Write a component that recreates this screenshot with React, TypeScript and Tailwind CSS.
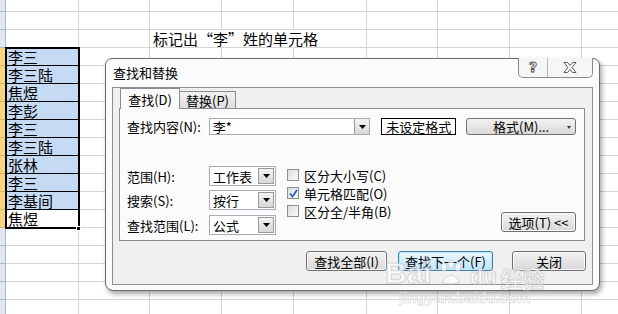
const colW = [73, 71, 72, 72, 73, 71, 72, 72, 72]
const names = ["李三", "李三陆", "焦煜", "李彭", "李三", "李三陆", "张林", "李三", "李基间", "焦煜"]
const rowH = [12, 18, 18, ...names.map(() => 18), 18, 18, 18, 18, 18]

const font = "font-['Noto_Sans_CJK_SC','Noto_Sans',sans-serif]"

function Arrow() {
  return (
    <svg width="7" height="4" viewBox="0 0 7 4">
      <polygon points="0,0 7,0 3.5,4" fill="#000" />
    </svg>
  )
}

function Combo({ value, w, h }: { value: string; w: string; h: string }) {
  return (
    <div className={`${w} ${h} flex items-stretch bg-white border border-[#a9acb4]`}>
      <div className="flex-1 flex items-center pl-[3px] text-[13px] leading-none">{value}</div>
      <div className="w-[16px] m-[1px] flex items-center justify-center border border-[#9a9a9a] bg-gradient-to-b from-[#f4f4f4] to-[#d8d8d8]">
        <Arrow />
      </div>
    </div>
  )
}

function Check({ label, checked }: { label: string; checked?: boolean }) {
  return (
    <div className="h-[18px] flex items-center gap-[5px]">
      <div className="w-[12px] h-[12px] border border-[#8f8f8f] bg-gradient-to-br from-[#dcdcdc] to-[#fbfbfb] flex items-center justify-center">
        {checked && (
          <svg width="9" height="9" viewBox="0 0 9 9">
            <path d="M1 4.5 L3.5 7.5 L8 1" stroke="#2b5fb3" strokeWidth="1.8" fill="none" />
          </svg>
        )}
      </div>
      <span className="text-[13px] leading-none">{label}</span>
    </div>
  )
}

function Btn({ label, w, focus }: { label: string; w: string; focus?: boolean }) {
  return (
    <div
      className={`${w} h-[20px] flex items-center justify-center rounded-[3px] text-[13px] leading-none ${
        focus
          ? "border border-[#3c7fb1] bg-gradient-to-b from-[#eaf6fd] to-[#bee6fd] shadow-[inset_0_0_0_1px_#c4e5f6]"
          : "border border-[#707070] bg-gradient-to-b from-[#f2f2f2] to-[#d9d9d9] shadow-[inset_0_0_0_1px_#fbfbfb]"
      }`}
    >
      {label}
    </div>
  )
}

export default function App() {
  return (
    <div className={`relative w-[618px] h-[314px] overflow-hidden bg-white ${font} text-black`}>
      {/* sheet */}
      <div className="flex flex-col">
        {rowH.map((h, r) => {
          const data = r >= 3 && r < 3 + names.length
          return (
            <div key={r} className="flex shrink-0" style={{ height: h }}>
              <div
                className={`w-[6px] shrink-0 border-r border-b ${
                  data ? "bg-[#f7d47d] border-[#e1b35a]" : "bg-[#e4e8ee] border-[#a9b8cb]"
                }`}
              />
              {colW.map((w, c) => {
                const first = c === 0
                const isData = first && data
                const blackBottom = first && (data || r === 2)
                const title = r === 2 && c === 2
                const hideRight = r === 2 && (c === 2 || c === 3)
                return (
                  <div
                    key={c}
                    className={`relative shrink-0 border-b ${hideRight ? "" : "border-r"} ${
                      blackBottom ? "border-b-black" : "border-b-[#d4d4d4]"
                    } ${isData ? "border-r-black" : "border-r-[#d4d4d4]"} ${
                      isData && r !== 12 ? "bg-[#c5dbf4]" : ""
                    }`}
                    style={{ width: w }}
                  >
                    {isData && (
                      <div className="pl-[2px] text-[15px] leading-[18px] whitespace-nowrap">{names[r - 3]}</div>
                    )}
                    {title && (
                      <div className="absolute left-[3px] top-0 z-10 text-[15px] leading-[18px] whitespace-nowrap">
                        标记出“李”姓的单元格
                      </div>
                    )}
                  </div>
                )
              })}
            </div>
          )
        })}
      </div>

      {/* selection frame */}
      <div className="absolute left-[5px] top-[47px] w-[75px] h-[182px] border-2 border-black pointer-events-none" />
      <div className="absolute left-[76px] top-[226px] w-[5px] h-[5px] bg-black border border-white" />

      {/* dialog */}
      <div className="absolute left-[105px] top-[58px] w-[495px] h-[233px] flex flex-col rounded-t-[7px] rounded-b-[8px] border border-[#6b6b6b] bg-[#fbfbfb] shadow-[2px_3px_5px_rgba(0,0,0,0.35)]">
        <div className="h-[28px] shrink-0 pl-[7px] pt-[7px] text-[13px] leading-none">查找和替换</div>

        <div className="absolute right-[6px] top-[-1px] w-[75px] h-[20px] flex border border-[#8b8b8b] border-t-0 rounded-b-[5px] bg-[#f6f6f6]">
          <div className="w-[29px] flex items-center justify-center border-r border-[#b5b5b5] text-[14px] font-bold text-white [-webkit-text-stroke:1px_#5a5a5a] font-['DejaVu_Sans',sans-serif]">
            ?
          </div>
          <div className="flex-1 flex items-center justify-center">
            <svg width="14" height="11" viewBox="0 0 14 11">
              <polygon
                points="1,0.5 4.5,0.5 7,3.5 9.5,0.5 13,0.5 9,5.5 13,10.5 9.5,10.5 7,7.5 4.5,10.5 1,10.5 5,5.5"
                fill="#fff"
                stroke="#5a5a5a"
                strokeWidth="1"
              />
            </svg>
          </div>
        </div>

        <div className="mx-[6px] h-[198px] shrink-0 flex flex-col border border-[#8e8f8f] bg-[#f0f0f0]">
          {/* tabs */}
          <div className="h-[20px] pl-[7px] flex items-end relative z-10">
            <div className="w-[60px] h-[21px] mb-[-1px] flex items-center justify-center border border-b-0 border-[#898c95] bg-[#fbfbfb] text-[13px] leading-none">
              查找(D)
            </div>
            <div className="w-[56px] h-[17px] flex items-center justify-center border border-l-0 border-b-0 border-[#898c95] bg-gradient-to-b from-[#f2f2f2] to-[#dedede] text-[13px] leading-none">
              替换(P)
            </div>
          </div>

          {/* panel */}
          <div className="ml-[6px] w-[466px] h-[133px] border border-[#898c95] bg-[#fbfbfb] pt-[9px] pl-[7px] pr-[8px] flex flex-col">
            <div className="flex items-center h-[17px]">
              <div className="w-[82px] text-[13px] leading-none">查找内容(N):</div>
              <div className="w-[162px] h-[17px] flex bg-white border border-[#a9acb4]">
                <div className="flex-1 flex items-center pl-[3px] text-[13px] leading-none">李*</div>
                <div className="w-[15px] flex items-center justify-center border-l border-[#9a9a9a] bg-gradient-to-b from-[#f4f4f4] to-[#d8d8d8]">
                  <Arrow />
                </div>
              </div>
              <div className="ml-[11px] w-[75px] h-[17px] flex items-center justify-center border border-black bg-white text-[13px] leading-none">
                未设定格式
              </div>
              <div className="relative ml-[10px] w-[110px] h-[17px] flex items-center justify-center rounded-[3px] border border-[#707070] bg-gradient-to-b from-[#f2f2f2] to-[#d9d9d9] text-[13px] leading-none">
                格式(M)...
                <div className="absolute right-[4px] top-[7px] w-0 h-0 border-l-[2px] border-r-[2px] border-t-[3px] border-l-transparent border-r-transparent border-t-[#333]" />
              </div>
            </div>

            <div className="mt-[31px] flex">
              <div className="flex flex-col">
                <div className="flex items-center">
                  <div className="w-[82px] text-[13px] leading-none">范围(H):</div>
                  <Combo value="工作表" w="w-[67px]" h="h-[20px]" />
                </div>
                <div className="mt-[4px] flex items-center">
                  <div className="w-[82px] text-[13px] leading-none">搜索(S):</div>
                  <Combo value="按行" w="w-[67px]" h="h-[20px]" />
                </div>
                <div className="mt-[5px] flex items-center">
                  <div className="w-[82px] text-[13px] leading-none">查找范围(L):</div>
                  <Combo value="公式" w="w-[67px]" h="h-[20px]" />
                </div>
              </div>
              <div className="ml-[11px] flex flex-col">
                <Check label="区分大小写(C)" />
                <Check label="单元格匹配(O)" checked />
                <Check label="区分全/半角(B)" />
              </div>
              <div className="ml-auto self-end mb-[3px]">
                <Btn label="选项(T) <<" w="w-[75px]" />
              </div>
            </div>
          </div>

          {/* bottom buttons */}
          <div className="mt-[10px] pr-[6px] flex justify-end gap-[11px]">
            <Btn label="查找全部(I)" w="w-[81px]" />
            <Btn label="查找下一个(F)" w="w-[95px]" focus />
            <div className="ml-[8px]">
              <Btn label="关闭" w="w-[74px]" />
            </div>
          </div>
        </div>
      </div>

      {/* watermark */}
      <div className="absolute left-[385px] top-[258px] flex flex-col items-center pointer-events-none opacity-70">
        <div className="flex items-end gap-[4px] text-[30px] leading-none font-bold text-white [-webkit-text-stroke:1px_#c8c8c8] font-['Liberation_Sans',sans-serif]">
          <span>Bai</span>
          <svg width="30" height="30" viewBox="0 0 30 30">
            <g fill="#fff" stroke="#c8c8c8" strokeWidth="1">
              <ellipse cx="8" cy="9" rx="3" ry="4" />
              <ellipse cx="15" cy="6" rx="3" ry="4" />
              <ellipse cx="22" cy="9" rx="3" ry="4" />
              <path d="M6 24 Q15 10 24 24 Q15 28 6 24 Z" />
            </g>
          </svg>
          <span className="text-[22px]">du</span>
          <span className={`text-[22px] ${font}`}>经验</span>
        </div>
        <div className="mt-[2px] text-[15px] leading-none font-bold text-white [-webkit-text-stroke:0.6px_#c8c8c8] font-['Liberation_Sans',sans-serif]">
          jingyan.baidu.com
        </div>
      </div>
    </div>
  )
}
